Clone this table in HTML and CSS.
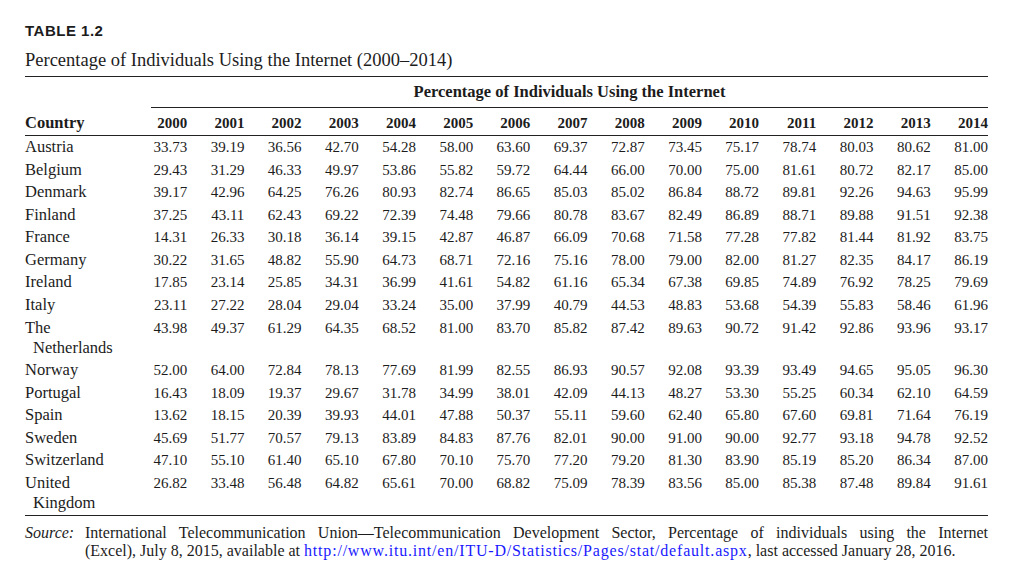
FILE: index.html
```html
<!DOCTYPE html>
<html>
<head>
<meta charset="utf-8">
<link rel="stylesheet" href="styles.css">
</head>
<body>
<div class="page">
  <div class="label">TABLE 1.2</div>
  <div class="caption">Percentage of Individuals Using the Internet (2000–2014)</div>
  <table class="data">
    <colgroup>
      <col class="c-country">
      <col span="15" class="c-num">
    </colgroup>
    <thead>
      <tr class="span-row"><th></th><th colspan="15" class="span-head"><div class="span-inner">Percentage of Individuals Using the Internet</div></th></tr>
      <tr class="year-row"><th class="country">Country</th><th>2000</th><th>2001</th><th>2002</th><th>2003</th><th>2004</th><th>2005</th><th>2006</th><th>2007</th><th>2008</th><th>2009</th><th>2010</th><th>2011</th><th>2012</th><th>2013</th><th>2014</th></tr>
    </thead>
    <tbody>
      <tr><td class="country">Austria</td><td>33.73</td><td>39.19</td><td>36.56</td><td>42.70</td><td>54.28</td><td>58.00</td><td>63.60</td><td>69.37</td><td>72.87</td><td>73.45</td><td>75.17</td><td>78.74</td><td>80.03</td><td>80.62</td><td>81.00</td></tr>
      <tr><td class="country">Belgium</td><td>29.43</td><td>31.29</td><td>46.33</td><td>49.97</td><td>53.86</td><td>55.82</td><td>59.72</td><td>64.44</td><td>66.00</td><td>70.00</td><td>75.00</td><td>81.61</td><td>80.72</td><td>82.17</td><td>85.00</td></tr>
      <tr><td class="country">Denmark</td><td>39.17</td><td>42.96</td><td>64.25</td><td>76.26</td><td>80.93</td><td>82.74</td><td>86.65</td><td>85.03</td><td>85.02</td><td>86.84</td><td>88.72</td><td>89.81</td><td>92.26</td><td>94.63</td><td>95.99</td></tr>
      <tr><td class="country">Finland</td><td>37.25</td><td>43.11</td><td>62.43</td><td>69.22</td><td>72.39</td><td>74.48</td><td>79.66</td><td>80.78</td><td>83.67</td><td>82.49</td><td>86.89</td><td>88.71</td><td>89.88</td><td>91.51</td><td>92.38</td></tr>
      <tr><td class="country">France</td><td>14.31</td><td>26.33</td><td>30.18</td><td>36.14</td><td>39.15</td><td>42.87</td><td>46.87</td><td>66.09</td><td>70.68</td><td>71.58</td><td>77.28</td><td>77.82</td><td>81.44</td><td>81.92</td><td>83.75</td></tr>
      <tr><td class="country">Germany</td><td>30.22</td><td>31.65</td><td>48.82</td><td>55.90</td><td>64.73</td><td>68.71</td><td>72.16</td><td>75.16</td><td>78.00</td><td>79.00</td><td>82.00</td><td>81.27</td><td>82.35</td><td>84.17</td><td>86.19</td></tr>
      <tr><td class="country">Ireland</td><td>17.85</td><td>23.14</td><td>25.85</td><td>34.31</td><td>36.99</td><td>41.61</td><td>54.82</td><td>61.16</td><td>65.34</td><td>67.38</td><td>69.85</td><td>74.89</td><td>76.92</td><td>78.25</td><td>79.69</td></tr>
      <tr><td class="country">Italy</td><td>23.11</td><td>27.22</td><td>28.04</td><td>29.04</td><td>33.24</td><td>35.00</td><td>37.99</td><td>40.79</td><td>44.53</td><td>48.83</td><td>53.68</td><td>54.39</td><td>55.83</td><td>58.46</td><td>61.96</td></tr>
      <tr><td class="country">The Netherlands</td><td>43.98</td><td>49.37</td><td>61.29</td><td>64.35</td><td>68.52</td><td>81.00</td><td>83.70</td><td>85.82</td><td>87.42</td><td>89.63</td><td>90.72</td><td>91.42</td><td>92.86</td><td>93.96</td><td>93.17</td></tr>
      <tr><td class="country">Norway</td><td>52.00</td><td>64.00</td><td>72.84</td><td>78.13</td><td>77.69</td><td>81.99</td><td>82.55</td><td>86.93</td><td>90.57</td><td>92.08</td><td>93.39</td><td>93.49</td><td>94.65</td><td>95.05</td><td>96.30</td></tr>
      <tr><td class="country">Portugal</td><td>16.43</td><td>18.09</td><td>19.37</td><td>29.67</td><td>31.78</td><td>34.99</td><td>38.01</td><td>42.09</td><td>44.13</td><td>48.27</td><td>53.30</td><td>55.25</td><td>60.34</td><td>62.10</td><td>64.59</td></tr>
      <tr><td class="country">Spain</td><td>13.62</td><td>18.15</td><td>20.39</td><td>39.93</td><td>44.01</td><td>47.88</td><td>50.37</td><td>55.11</td><td>59.60</td><td>62.40</td><td>65.80</td><td>67.60</td><td>69.81</td><td>71.64</td><td>76.19</td></tr>
      <tr><td class="country">Sweden</td><td>45.69</td><td>51.77</td><td>70.57</td><td>79.13</td><td>83.89</td><td>84.83</td><td>87.76</td><td>82.01</td><td>90.00</td><td>91.00</td><td>90.00</td><td>92.77</td><td>93.18</td><td>94.78</td><td>92.52</td></tr>
      <tr><td class="country">Switzerland</td><td>47.10</td><td>55.10</td><td>61.40</td><td>65.10</td><td>67.80</td><td>70.10</td><td>75.70</td><td>77.20</td><td>79.20</td><td>81.30</td><td>83.90</td><td>85.19</td><td>85.20</td><td>86.34</td><td>87.00</td></tr>
      <tr><td class="country">United Kingdom</td><td>26.82</td><td>33.48</td><td>56.48</td><td>64.82</td><td>65.61</td><td>70.00</td><td>68.82</td><td>75.09</td><td>78.39</td><td>83.56</td><td>85.00</td><td>85.38</td><td>87.48</td><td>89.84</td><td>91.61</td></tr>
    </tbody>
  </table>
  <div class="source">
    <span class="src-label">Source:</span>
    <div class="src-text">
      <span class="src-line first">International Telecommunication Union—Telecommunication Development Sector, Percentage of individuals using the Internet</span>
      <span class="src-line">(Excel), July 8, 2015, available at <a href="#" class="link">http://www.itu.int/en/ITU-D/Statistics/Pages/stat/default.aspx</a>, last accessed January 28, 2016.</span>
    </div>
  </div>
</div>
</body>
</html>
```
FILE: styles.css
```css
html, body {
  margin: 0;
  padding: 0;
  background: #ffffff;
}
body {
  font-family: "Liberation Serif", "Times New Roman", serif;
  color: #1c1c1c;
  font-size: 15px;
}
.page {
  width: 963px;
  padding: 21px 0 0 25px;
}
.label {
  font-family: "Liberation Sans", Arial, sans-serif;
  font-weight: bold;
  font-size: 15px;
  letter-spacing: 0.5px;
  line-height: 20px;
}
.caption {
  font-size: 18.5px;
  line-height: 22px;
  margin-top: 8px;
  padding-bottom: 5px;
  border-bottom: 1px solid #222;
}
.data {
  width: 963px;
  border-collapse: collapse;
  table-layout: fixed;
}
.c-country { width: 105px; }
.data th, .data td {
  padding: 1.28px 0;
  line-height: 20px;
  text-align: right;
  vertical-align: baseline;
  white-space: nowrap;
}
.data th {
  font-weight: bold;
}
.data .span-row th {
  padding: 5px 0 0 0;
}
.data .span-head {
  text-align: center;
}
.span-inner {
  margin-left: 21px;
  padding-bottom: 5px;
  border-bottom: 1px solid #222;
  font-size: 16.5px;
}
.data .year-row th {
  padding-top: 5px;
  padding-bottom: 2px;
  border-bottom: 1px solid #222;
}
.data .country {
  text-align: left;
  white-space: normal;
  padding-left: 8px;
  text-indent: -8px;
  font-size: 16.5px;
}
.data tbody tr:last-child td {
  padding-bottom: 2px;
  border-bottom: 1px solid #222;
}
.source {
  display: flex;
  margin-top: 8px;
  font-size: 16px;
  line-height: 18px;
}
.src-label {
  font-style: italic;
  flex: 0 0 60px;
}
.src-text {
  flex: 1;
}
.src-line {
  display: block;
}
.src-line.first {
  text-align: justify;
  text-align-last: justify;
}
.link {
  color: #1a1aff;
  text-decoration: none;
  letter-spacing: 0.8px;
}
```
